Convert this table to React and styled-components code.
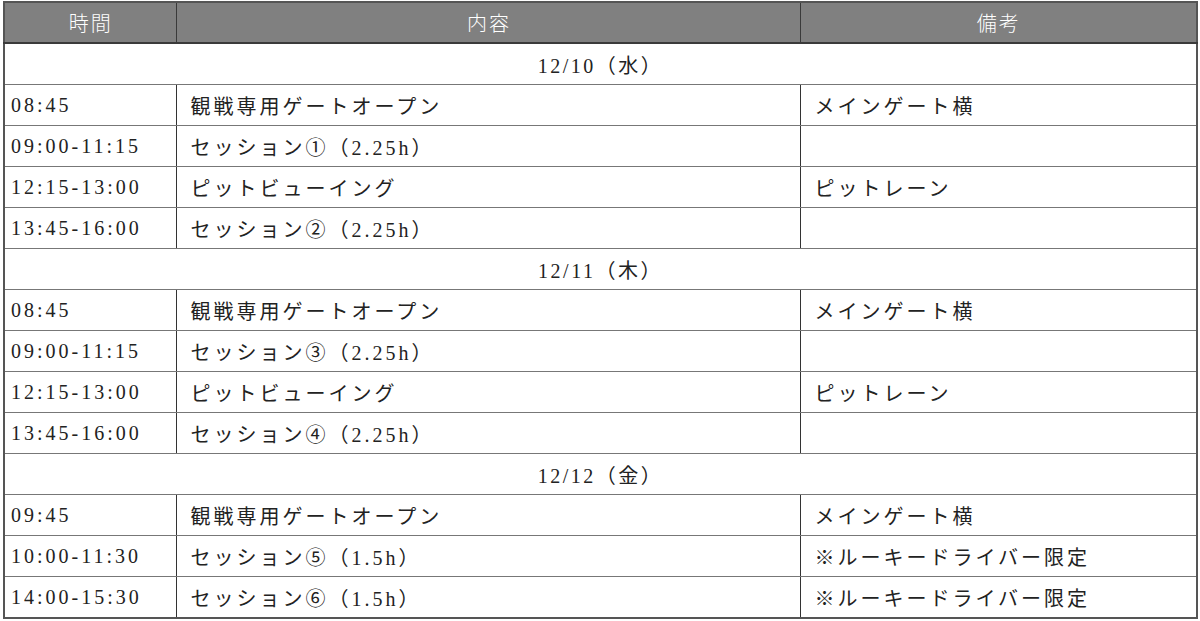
import React from "react";
import styled, { createGlobalStyle } from "styled-components";

const GlobalStyle = createGlobalStyle`
	html, body {
		margin: 0;
		padding: 0;
		background: #fff;
	}
	body {
		font-family: "Liberation Serif", "Noto Sans CJK JP", serif;
		color: #222;
	}
`;

const Wrapper = styled.div`
	padding: 1px 2px 0 3px;
`;

const Table = styled.table`
	width: 100%;
	border-collapse: collapse;
	table-layout: fixed;
	border: 2px solid #555;
`;

const HeadCell = styled.th`
	height: 39px;
	padding: 0;
	background-color: #808080;
	color: #fff;
	font-family: "Noto Sans CJK JP", sans-serif;
	font-weight: 300;
	font-size: 20px;
	letter-spacing: 2px;
	text-align: center;
	border: 1px solid #3a3a3a;
	border-bottom: 2px solid #3a3a3a;
`;

const DateCell = styled.td`
	height: 40px;
	padding: 0;
	text-align: center;
	font-size: 20px;
	letter-spacing: 2.5px;
	border-top: 1px solid #777;
	border-bottom: 1px solid #777;
`;

const Cell = styled.td`
	height: 40px;
	padding: 0 0 0 ${(p) => (p.$first ? "6px" : "13px")};
	font-size: 20px;
	letter-spacing: 3px;
	white-space: nowrap;
	border-top: 1px solid #777;
	border-bottom: 1px solid #777;
	border-left: 1px solid #333;
	border-right: 1px solid #333;
`;

const days = [
	{
		date: "12/10（水）",
		rows: [
			["08:45", "観戦専用ゲートオープン", "メインゲート横"],
			["09:00-11:15", "セッション①（2.25h）", ""],
			["12:15-13:00", "ピットビューイング", "ピットレーン"],
			["13:45-16:00", "セッション②（2.25h）", ""],
		],
	},
	{
		date: "12/11（木）",
		rows: [
			["08:45", "観戦専用ゲートオープン", "メインゲート横"],
			["09:00-11:15", "セッション③（2.25h）", ""],
			["12:15-13:00", "ピットビューイング", "ピットレーン"],
			["13:45-16:00", "セッション④（2.25h）", ""],
		],
	},
	{
		date: "12/12（金）",
		rows: [
			["09:45", "観戦専用ゲートオープン", "メインゲート横"],
			["10:00-11:30", "セッション⑤（1.5h）", "※ルーキードライバー限定"],
			["14:00-15:30", "セッション⑥（1.5h）", "※ルーキードライバー限定"],
		],
	},
];

export default function App() {
	return (
		<>
			<GlobalStyle />
			<Wrapper>
				<Table>
					<colgroup>
						<col style={{ width: "14.5%" }} />
						<col style={{ width: "52.3%" }} />
						<col />
					</colgroup>
					<thead>
						<tr>
							<HeadCell>時間</HeadCell>
							<HeadCell>内容</HeadCell>
							<HeadCell>備考</HeadCell>
						</tr>
					</thead>
					<tbody>
						{days.map((day) => (
							<React.Fragment key={day.date}>
								<tr>
									<DateCell colSpan={3}>{day.date}</DateCell>
								</tr>
								{day.rows.map(([time, content, note], i) => (
									<tr key={i}>
										<Cell $first>{time}</Cell>
										<Cell>{content}</Cell>
										<Cell>{note}</Cell>
									</tr>
								))}
							</React.Fragment>
						))}
					</tbody>
				</Table>
			</Wrapper>
		</>
	);
}
